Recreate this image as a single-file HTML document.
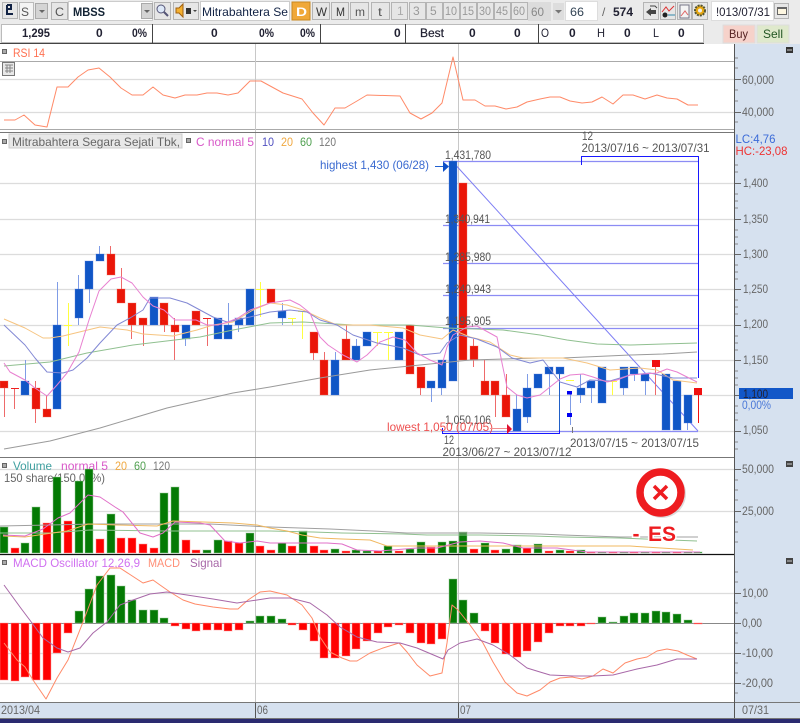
<!DOCTYPE html>
<html><head><meta charset="utf-8"><style>
html,body{margin:0;padding:0;background:#fff;overflow:hidden}
svg{display:block;font-family:"Liberation Sans",sans-serif;font-size:12px}
.b{font-weight:bold;fill:#223}
.l{fill:none;stroke-width:1;stroke-linejoin:round}
.btn{fill:#e6e6e6;stroke:#b4b4b4}
.sq{fill:#aaa;stroke:#666}
</style></head><body>
<svg width="800" height="723" viewBox="0 0 800 723" xmlns="http://www.w3.org/2000/svg">
<rect width="800" height="723" fill="#fff"/>
<!-- toolbar -->
<rect width="800" height="44" fill="#ebebeb"/>
<rect x="2.5" y="2.5" width="15" height="16" class="btn"/>
<path d="M7 5v9h6M7 5h4v4H7" fill="none" stroke="#124" stroke-width="2"/>
<rect x="19.5" y="2.5" width="14" height="17" fill="#f4f4f4" stroke="#bbb"/>
<rect x="35.5" y="3.5" width="12" height="15" fill="#d4d4d4" stroke="#aaa"/>
<path d="M39 10h6l-3 3z" fill="#666"/>
<rect x="51.5" y="2.5" width="16" height="17" class="btn"/>
<rect x="68.5" y="1.5" width="84" height="19" fill="#fff" stroke="#ccc"/>
<rect x="141.5" y="3.5" width="11" height="15" fill="#d4d4d4" stroke="#aaa"/>
<path d="M144 10h6l-3 3z" fill="#666"/>
<rect x="154.5" y="2.5" width="16" height="17" class="btn"/>
<circle cx="161" cy="9" r="4" fill="#dde8f8" stroke="#557"/><path d="M164 12l4 4" stroke="#557" stroke-width="2"/>
<rect x="173.5" y="2.5" width="25" height="17" class="btn"/>
<path d="M176 8h3l4-4v13l-4-4h-3z" fill="#f4b030" stroke="#a06010"/>
<path d="M186 8h5v6h-5z M188 6v2" fill="#333"/><path d="M193 10h4l-2 2z" fill="#444"/>
<rect x="200.5" y="1.5" width="89" height="19" fill="#fff" stroke="#ccc"/>
<rect x="292" y="2" width="18" height="18" fill="#f0a838" stroke="#c88820"/>
<rect x="312.5" y="2.5" width="17" height="17" class="btn"/><rect x="331.5" y="2.5" width="17" height="17" class="btn"/><rect x="350.5" y="2.5" width="18" height="17" class="btn"/><rect x="371.5" y="2.5" width="18" height="17" class="btn"/>
<rect x="391.5" y="2.5" width="16" height="17" class="btn"/><rect x="409.5" y="2.5" width="16" height="17" class="btn"/><rect x="426.5" y="2.5" width="16" height="17" class="btn"/><rect x="443.5" y="2.5" width="16" height="17" class="btn"/><rect x="460.5" y="2.5" width="16" height="17" class="btn"/><rect x="477.5" y="2.5" width="16" height="17" class="btn"/><rect x="494.5" y="2.5" width="16" height="17" class="btn"/><rect x="511.5" y="2.5" width="16" height="17" class="btn"/>
<rect x="528" y="2" width="23" height="19" fill="#dcdcdc"/>
<rect x="553" y="3" width="11" height="17" fill="#ddd"/><path d="M555 10h7l-3.5 3.5z" fill="#777"/>
<rect x="565.5" y="1.5" width="32" height="19" fill="#fff" stroke="#ddd"/>
<rect x="643.5" y="2.5" width="15" height="17" class="btn"/><path d="M646 12l5-4v2h5v4h-5v2z" fill="#444"/><path d="M650 6h5l2 2" stroke="#444" fill="none"/>
<rect x="660.5" y="2.5" width="15" height="17" class="btn"/><path d="M662 12l4-5 3 4 5-5" stroke="#d33" fill="none"/><circle cx="665" cy="15" r="2.5" fill="#222"/><path d="M668 15h7" stroke="#38a" />
<rect x="677.5" y="2.5" width="14" height="17" class="btn"/><path d="M680 5h9v13h-9z" fill="#f4f4f4" stroke="#778"/><path d="M681 16l4-5 3 4" stroke="#d66" fill="none"/>
<rect x="692.5" y="2.5" width="15" height="17" class="btn"/><circle cx="700" cy="10.5" r="5" fill="#e8a810" stroke="#553" stroke-dasharray="2 1" stroke-width="2"/><circle cx="700" cy="10.5" r="2" fill="#eee"/>
<rect x="711.5" y="1.5" width="62" height="19" fill="#fff" stroke="#ddd"/>
<rect x="774.5" y="3.5" width="14" height="15" class="btn"/><rect x="777.5" y="7.5" width="9" height="7" fill="#fdf6e0" stroke="#666"/><path d="M777 7h10v2h-10z" fill="#666"/>
<g fill="#223" font-weight="bold">
<text x="73" y="16" fill="#123" textLength="32" lengthAdjust="spacingAndGlyphs">MBSS</text>
</g>
<g fill="#555">
<text x="21" y="16" textLength="8" lengthAdjust="spacingAndGlyphs">S</text>
<text x="55" y="16" textLength="9" lengthAdjust="spacingAndGlyphs">C</text>
<text x="316" y="16" textLength="11" lengthAdjust="spacingAndGlyphs" fill="#333">W</text>
<text x="336" y="16" textLength="9" lengthAdjust="spacingAndGlyphs" fill="#333">M</text>
<text x="355" y="16" textLength="10" lengthAdjust="spacingAndGlyphs" fill="#555">m</text>
<text x="378" y="16" textLength="4" lengthAdjust="spacingAndGlyphs" fill="#555">t</text>
<text x="397" y="15" fill="#aaa">1</text><text x="413" y="15" fill="#999">3</text><text x="430" y="15" fill="#999">5</text>
<text x="445" y="15" fill="#999" textLength="12" lengthAdjust="spacingAndGlyphs">10</text><text x="462" y="15" fill="#999" textLength="12" lengthAdjust="spacingAndGlyphs">15</text><text x="479" y="15" fill="#999" textLength="12" lengthAdjust="spacingAndGlyphs">30</text><text x="496" y="15" fill="#999" textLength="12" lengthAdjust="spacingAndGlyphs">45</text><text x="513" y="15" fill="#999" textLength="12" lengthAdjust="spacingAndGlyphs">60</text>
<text x="531" y="16" fill="#888" textLength="13" lengthAdjust="spacingAndGlyphs">60</text>
<text x="570" y="16" fill="#345" textLength="14" lengthAdjust="spacingAndGlyphs">66</text>
<text x="602" y="16" fill="#666">/</text>
</g>
<text x="613" y="16" class="b" textLength="20" lengthAdjust="spacingAndGlyphs" fill="#345">574</text>
<text x="202" y="16" fill="#124" textLength="86" lengthAdjust="spacingAndGlyphs">Mitrabahtera Se</text>
<text x="296" y="16" fill="#fff" font-weight="bold" textLength="11" lengthAdjust="spacingAndGlyphs">D</text>
<text x="716" y="16" fill="#223" textLength="54" lengthAdjust="spacingAndGlyphs">!013/07/31</text>
<!-- row 2 -->
<rect x="1.5" y="24.5" width="151" height="18" fill="#fff" stroke="#bbb"/>
<rect x="152.5" y="24.5" width="168" height="18" fill="#fff" stroke="#bbb"/>
<rect x="320.5" y="24.5" width="85" height="18" fill="#fff" stroke="#bbb"/>
<rect x="405.5" y="24.5" width="133" height="18" fill="#fff" stroke="#bbb"/>
<rect x="538.5" y="24.5" width="165" height="18" fill="#fff" stroke="#bbb"/>
<path d="M0 43.5H704M152.5 24V43M320.5 24V43M405.5 24V43M538.5 24V43" stroke="#444"/>
<g class="b" font-weight="bold" fill="#223">
<text x="22" y="37" textLength="28" lengthAdjust="spacingAndGlyphs">1,295</text>
<text x="96" y="37">0</text><text x="132" y="37" textLength="15" lengthAdjust="spacingAndGlyphs">0%</text>
<text x="211" y="37">0</text><text x="259" y="37" textLength="15" lengthAdjust="spacingAndGlyphs">0%</text><text x="300" y="37" textLength="15" lengthAdjust="spacingAndGlyphs">0%</text>
<text x="394" y="37">0</text>
<text x="469" y="37">0</text><text x="514" y="37">0</text>
<text x="569" y="37">0</text><text x="624" y="37">0</text><text x="678" y="37">0</text>
</g>
<g fill="#223" font-size="12">
<text x="420" y="37" textLength="24" lengthAdjust="spacingAndGlyphs" stroke="#223" stroke-width=".2">Best</text>
<text x="541" y="37" textLength="8" lengthAdjust="spacingAndGlyphs">O</text>
<text x="597" y="37" textLength="8" lengthAdjust="spacingAndGlyphs">H</text>
<text x="653" y="37" textLength="6" lengthAdjust="spacingAndGlyphs">L</text>
</g>
<rect x="723" y="25" width="32" height="18" fill="#f6d2ca" stroke="#ddd"/>
<rect x="757" y="25" width="32" height="18" fill="#dfe9cc" stroke="#ddd"/>
<text x="729" y="38" fill="#522" textLength="19" lengthAdjust="spacingAndGlyphs">Buy</text>
<text x="763" y="38" fill="#252" textLength="20" lengthAdjust="spacingAndGlyphs">Sell</text>

<!-- right axis -->
<rect x="735" y="44" width="65" height="674" fill="#d6e1ef"/>
<rect x="0" y="703" width="735" height="15" fill="#d6e1ef"/>
<!-- grids -->
<path d="M0 79.5H734M0 112.5H734M0 183.5H734M0 219.5H734M0 254.5H734M0 289.5H734M0 325.5H734M0 360.5H734M0 395.5H734M0 431.5H734M0 469.5H734M0 511.5H734M0 593.5H734M0 653.5H734M0 683.5H734" stroke="#dcdcdc" stroke-width="1.3"/>
<path d="M0 61.5H734M0 129.5H734" stroke="#aaa"/>
<path d="M255.5 44V703M458.5 44V703" stroke="#c8c8c8"/>
<path d="M0 132.5H735M0 457.5H735M0 702.5H800M0 718.5H800" stroke="#777"/>
<path d="M0 554.5H735" stroke="#111" stroke-width="1.2"/>
<path d="M734.5 44V718M255.5 703V718M458.5 703V718" stroke="#555"/>
<rect y="719" width="800" height="4" fill="#2a2a70"/>

<!-- axis ticks -->
<path d="M735 79.5h6M735 112.5h6M735 183.5h6M735 219.5h6M735 254.5h6M735 289.5h6M735 325.5h6M735 360.5h6M735 395.5h6M735 431.5h6M735 469.5h6M735 511.5h6M735 593.5h6M735 623.5h6M735 653.5h6M735 683.5h6" stroke="#666"/>
<path d="M735 58h3M735 68h3M735 90h3M735 101h3M735 122h3M735 165h3M735 172h3M735 194h3M735 201h3M735 208h3M735 230h3M735 237h3M735 244h3M735 265h3M735 272h3M735 279h3M735 300h3M735 307h3M735 314h3M735 336h3M735 343h3M735 350h3M735 371h3M735 378h3M735 385h3M735 406h3M735 413h3M735 420h3M735 442h3M735 449h3M735 480h3M735 490h3M735 500h3M735 522h3M735 532h3M735 542h3M735 572h3M735 582h3M735 603h3M735 613h3M735 633h3M735 643h3M735 663h3M735 673h3M735 693h3" stroke="#888"/>
<rect x="786" y="47" width="7" height="6" fill="#333"/><rect x="786" y="461" width="7" height="6" fill="#444"/><rect x="786" y="558" width="7" height="6" fill="#444"/>
<path d="M787 50h5M787 464h5M787 561h5" stroke="#ccc"/>
<rect x="739" y="388" width="54" height="11" fill="#1257c8"/>
<g fill="#666">
<text x="742" y="84" textLength="32" lengthAdjust="spacingAndGlyphs">60,000</text>
<text x="742" y="116" textLength="32" lengthAdjust="spacingAndGlyphs">40,000</text>
<text x="743" y="187" textLength="25" lengthAdjust="spacingAndGlyphs">1,400</text>
<text x="743" y="223" textLength="25" lengthAdjust="spacingAndGlyphs">1,350</text>
<text x="743" y="258" textLength="25" lengthAdjust="spacingAndGlyphs">1,300</text>
<text x="743" y="293" textLength="25" lengthAdjust="spacingAndGlyphs">1,250</text>
<text x="743" y="328" textLength="25" lengthAdjust="spacingAndGlyphs">1,200</text>
<text x="743" y="364" textLength="25" lengthAdjust="spacingAndGlyphs">1,150</text>
<text x="743" y="398" textLength="25" lengthAdjust="spacingAndGlyphs" fill="#223">1,100</text>
<text x="743" y="434" textLength="25" lengthAdjust="spacingAndGlyphs">1,050</text>
<text x="742" y="473" textLength="32" lengthAdjust="spacingAndGlyphs">50,000</text>
<text x="742" y="515" textLength="32" lengthAdjust="spacingAndGlyphs">25,000</text>
<text x="742" y="597" textLength="26" lengthAdjust="spacingAndGlyphs">10,00</text>
<text x="742" y="627" textLength="20" lengthAdjust="spacingAndGlyphs">0,00</text>
<text x="742" y="657" textLength="31" lengthAdjust="spacingAndGlyphs">-10,00</text>
<text x="742" y="687" textLength="31" lengthAdjust="spacingAndGlyphs">-20,00</text>
<text x="742" y="714" textLength="27" lengthAdjust="spacingAndGlyphs">07/31</text>
<text x="1" y="714" textLength="39" lengthAdjust="spacingAndGlyphs">2013/04</text>
<text x="257" y="714" textLength="11" lengthAdjust="spacingAndGlyphs">06</text>
<text x="460" y="714" textLength="11" lengthAdjust="spacingAndGlyphs">07</text>
</g>
<text x="742" y="409" fill="#4a78d8" textLength="29" lengthAdjust="spacingAndGlyphs">0,00%</text>
<text x="735.5" y="143" fill="#3a6ad8" textLength="40" lengthAdjust="spacingAndGlyphs">LC:4,76</text>
<text x="735.5" y="155" fill="#ee3333" textLength="52" lengthAdjust="spacingAndGlyphs">HC:-23,08</text>

<!-- headers -->
<rect x="2.5" y="49.5" width="4" height="4" class="sq"/>
<text x="13" y="57" fill="#ff7050" textLength="32" lengthAdjust="spacingAndGlyphs">RSI 14</text>
<rect x="2.5" y="62.5" width="12" height="13" fill="#e8e8e8" stroke="#777"/><path d="M5 65h8M5 68h8M5 71h8M7 65v8M10 65v8" stroke="#888" fill="none"/>
<rect x="2.5" y="139.5" width="4" height="4" class="sq"/>
<rect x="9" y="134" width="173" height="14" fill="#e8e8e8" stroke="#ccc"/>
<text x="12" y="146" fill="#666" textLength="168" lengthAdjust="spacingAndGlyphs">Mitrabahtera Segara Sejati Tbk,</text>
<rect x="186.5" y="138.5" width="4" height="4" class="sq"/>
<text x="196" y="146" fill="#d858c8" textLength="58" lengthAdjust="spacingAndGlyphs">C normal 5</text>
<text x="262" y="146" fill="#5050c0" textLength="12" lengthAdjust="spacingAndGlyphs">10</text>
<text x="281" y="146" fill="#f0a840" textLength="12" lengthAdjust="spacingAndGlyphs">20</text>
<text x="300" y="146" fill="#50a050" textLength="12" lengthAdjust="spacingAndGlyphs">60</text>
<text x="319" y="146" fill="#777" textLength="17" lengthAdjust="spacingAndGlyphs">120</text>
<rect x="2.5" y="463.5" width="4" height="4" class="sq"/>
<text x="13" y="470" fill="#40a0a0" textLength="39" lengthAdjust="spacingAndGlyphs">Volume</text>
<text x="61" y="470" fill="#d858c8" textLength="47" lengthAdjust="spacingAndGlyphs">normal 5</text>
<text x="115" y="470" fill="#f0a840" textLength="12" lengthAdjust="spacingAndGlyphs">20</text>
<text x="134" y="470" fill="#50a050" textLength="12" lengthAdjust="spacingAndGlyphs">60</text>
<text x="153" y="470" fill="#777" textLength="17" lengthAdjust="spacingAndGlyphs">120</text>
<rect x="2.5" y="560.5" width="4" height="4" class="sq"/>
<text x="13" y="567" fill="#d070f0" textLength="127" lengthAdjust="spacingAndGlyphs">MACD Oscillator 12,26,9</text>
<text x="148" y="567" fill="#ff9078" textLength="32" lengthAdjust="spacingAndGlyphs">MACD</text>
<text x="190" y="567" fill="#a868a8" textLength="32" lengthAdjust="spacingAndGlyphs">Signal</text>
<text x="4" y="482" fill="#666" textLength="101" lengthAdjust="spacingAndGlyphs">150 share(150,00%)</text>

<!-- RSI -->
<path class="l" stroke="#ff8a68" d="M4 120L15 120L24 115L35 125L47 127L57 87L68 87L78 77L88 70L99 68L110 77L121 88L132 95L143 95L153 87L163 95L175 98L185 95L197 95L207 93L217 93L228 95L238 93L250 81L261 81L272 87L283 93L302 99L313 113L324 125L335 108L345 108L357 101L367 95L400 96L410 113L421 119L432 113L442 103L453 57L463 100L475 100L485 106L495 106L506 109L517 107L527 102L540 99L550 97L560 97L570 101L582 103L592 102L602 97L613 104L623 95L633 95L645 99L657 95L667 98L677 99L688 105L698 105"/>

<!-- Fibonacci -->
<g fill="none">
<path d="M443 161.5H698M443 225.5H698M443 263.5H698M443 295.5H698M443 328.5H698M443 431.5H698" stroke="#8c8cf4" stroke-width="1.3"/>
<path d="M452 161L698 431" stroke="#7c7cf4"/>
<path d="M698.5 156V378M581.5 165V156.5H698.5M442.5 428V433.5H559.5V373" stroke="#1818ff"/>
</g>

<!-- candle wicks -->
<path fill="none" stroke="#7f9ce6" d="M25.5 360V381M57.5 282V325M78.5 275V325M89.5 289V303M99.5 246V254M185.5 339V346M228.5 303V325M238.5 325V332M282.5 303V325M335.5 352V360M356.5 339V346M431.5 388V402M441.5 388V395M516.5 395V409M527.5 374V423M549.5 374V395M570.5 391V425M580.5 374V403M591.5 388V403M623.5 388V395M634.5 374V381M645.5 381V395M687.5 423V430"/>
<path fill="none" stroke="#2060c8" d="M559.5 374V430"/>
<path fill="none" stroke="#ee6a6a" d="M4.5 388V417M14.5 388V409M35.5 381V423M46.5 395V409M110.5 246V254M121.5 268V289M131.5 325V339M143.5 325V346M164.5 325V332M174.5 318V360M207.5 318V346M313.5 353V360M324.5 352V360M346.5 325V339M420.5 388V395M473.5 339V367M484.5 360V381M495.5 395V417M506.5 374V395M655.5 367V395"/>
<path fill="none" stroke="#f01010" d="M698.5 395V423"/>
<path fill="none" stroke="#ffff40" d="M68.5 303V346M64 325.5H72M260.5 282V317M256 289.5H264M292.5 318V325M288 318.5H296M302.5 311V339M298 311.5H306M377.5 332V346M373 332.5H382M388.5 332V360M384 332.5H393M612.5 381V395M608 381.5H617M566 380.5H574"/>
<!-- candle bodies -->
<g stroke-opacity=".35" stroke-width="1">
<path fill="#1056c6" stroke="#5a7fe0" d="M21 381h8v14h-8zM53 325h8v84h-8zM75 289h8v29h-8zM85 261h8v28h-8zM96 254h8v7h-8zM150 297h8v28h-8zM182 325h8v14h-8zM214 318h8v21h-8zM224 325h8v14h-8zM235 318h8v7h-8zM246 289h8v36h-8zM278 311h8v7h-8zM331 360h8v35h-8zM352 346h8v14h-8zM363 332h8v14h-8zM395 332h8v28h-8zM427 381h8v7h-8zM438 360h8v28h-8zM449 161h8v220h-8zM513 409h8v22h-8zM523 388h8v29h-8zM534 374h8v14h-8zM545 367h8v7h-8zM556 367h8v7h-8zM577 388h8v7h-8zM587 381h8v7h-8zM598 367h8v36h-8zM620 367h8v21h-8zM630 367h8v7h-8zM641 374h8v7h-8zM662 374h8v56h-8zM673 381h8v49h-8zM684 395h8v28h-8z"/>
<path fill="#ea1608" stroke="#f07060" d="M0 381h8v7h-8zM32 388h8v21h-8zM43 409h8v8h-8zM107 254h8v21h-8zM117 289h8v14h-8zM128 303h8v22h-8zM139 318h8v7h-8zM160 303h8v22h-8zM171 325h8v7h-8zM192 311h8v14h-8zM267 289h8v14h-8zM310 332h8v21h-8zM320 360h8v35h-8zM342 339h8v21h-8zM406 325h8v49h-8zM417 367h8v21h-8zM459 183h8v177h-8zM470 346h8v14h-8zM481 381h8v14h-8zM491 381h8v14h-8zM502 395h8v22h-8z"/>
</g>
<path d="M11 388.5h8M203 318.5h8" stroke="#f02020"/>
<rect x="652" y="360" width="8" height="7" fill="#f01010"/><rect x="694" y="388" width="8" height="7" fill="#f01010"/>
<rect x="567" y="391" width="5" height="3.5" fill="#0000f0"/><rect x="567" y="413" width="5" height="4" fill="#0000f0"/>

<!-- MAs -->
<path class="l" stroke="#9a9a9a" d="M4 449L50 441L100 428L167 408L233 393L270 387L320 378L370 370L420 365L470 360L540 358L563 358L630 355L663 354L697 352"/>
<path class="l" stroke="#90c090" d="M4 366L50 362L87 353L133 345L200 337L233 330L270 323L303 322L353 325L410 325L447 328L503 330L540 335L567 340L597 344L630 345L663 344L697 343"/>
<path class="l" stroke="#f6c480" d="M4 319L25 328L43 338L50 338L63 336L100 327L127 330L143 334L173 336L197 330L213 325L233 322L253 310L270 303L287 305L303 310L320 318L337 325L370 325L403 328L420 335L442 339L453 330L470 337L490 342L510 355L523 358L540 358L563 358L587 363L610 370L640 368L657 370L673 380L697 383"/>
<path class="l" stroke="#8288d4" d="M4 325L25 345L35 358L47 372L63 373L73 370L87 358L100 343L117 325L130 318L143 310L150 298L170 298L187 303L213 317L227 322L250 317L270 312L290 310L307 312L320 320L337 325L353 335L377 343L403 348L420 355L440 353L447 343L460 335L477 339L497 347L512 358L530 363L543 360L553 373L560 382L577 387L590 380L610 381L630 375L650 373L673 378L697 378"/>
<path class="l" stroke="#e880d0" d="M4 363L10 372L25 380L35 388L47 396L57 385L67 373L79 352L89 320L99 291L111 279L121 277L132 283L143 297L153 306L164 310L175 320L186 320L196 320L207 325L218 325L228 322L238 318L250 310L270 303L290 300L300 305L310 313L320 337L328 345L343 355L357 362L367 355L380 342L393 337L405 340L417 353L430 360L442 365L447 347L453 335L467 327L477 326L497 337L502 363L507 387L517 395L527 398L540 395L550 387L560 379L570 375L583 374L593 377L607 382L617 380L630 375L643 374L657 373L667 369L677 372L687 377L697 382"/>

<!-- fib labels -->
<g fill="#555">
<text x="445" y="159" textLength="46" lengthAdjust="spacingAndGlyphs">1,431,780</text>
<text x="445" y="223" textLength="45" lengthAdjust="spacingAndGlyphs">1,340,941</text>
<text x="445" y="261" textLength="46" lengthAdjust="spacingAndGlyphs">1,285,980</text>
<text x="445" y="293" textLength="46" lengthAdjust="spacingAndGlyphs">1,240,943</text>
<text x="445" y="325" textLength="46" lengthAdjust="spacingAndGlyphs">1,195,905</text>
<text x="445" y="424" textLength="46" lengthAdjust="spacingAndGlyphs">1,050,106</text>
<text x="444" y="444" textLength="10" lengthAdjust="spacingAndGlyphs">12</text>
<text x="442.5" y="456" textLength="129" lengthAdjust="spacingAndGlyphs">2013/06/27 ~ 2013/07/12</text>
<text x="570" y="447" textLength="129" lengthAdjust="spacingAndGlyphs">2013/07/15 ~ 2013/07/15</text>
<text x="582" y="140" textLength="11" lengthAdjust="spacingAndGlyphs">12</text>
<text x="581.5" y="152" textLength="128" lengthAdjust="spacingAndGlyphs">2013/07/16 ~ 2013/07/31</text>
</g>
<path d="M572.5 427V433" stroke="#777"/>
<text x="320" y="169" fill="#3a6ad0" textLength="109" lengthAdjust="spacingAndGlyphs">highest 1,430 (06/28)</text>
<path d="M435 166.5H444" stroke="#2060d0"/><path d="M443 161.5L449 166.5L443 172z" fill="#1050c8"/>
<text x="387" y="431" fill="#ee5050" textLength="106" lengthAdjust="spacingAndGlyphs">lowest 1,050 (07/05)</text>
<path d="M490 428.5H508" stroke="#f09090"/><path d="M507 424L512 429L507 434z" fill="#e01030"/>

<!-- volume bars -->
<path fill="#047a04" stroke="#9c9" stroke-opacity=".5" d="M0 527h8V553H0zM21 543h8V553h-8zM32 507h8V553h-8zM53 477h8V553h-8zM75 481h8V553h-8zM85 469h8V553h-8zM107 514h8V553h-8zM160 493h8V553h-8zM171 487h8V553h-8zM203 550h8V553h-8zM214 540h8V553h-8zM246 533h8V553h-8zM278 543h8V553h-8zM299 531h8V553h-8zM331 549h8V553h-8zM352 550h8V553h-8zM363 551h8V553h-8zM384 546h8V553h-8zM406 549h8V553h-8zM417 542h8V553h-8zM438 542h8V553h-8zM449 541h8V553h-8zM459 532h8V553h-8zM481 543h8V553h-8zM502 549h8V553h-8zM513 545h8V553h-8zM534 544h8V553h-8zM556 550h8V553h-8zM577 550h8V553h-8zM598 552h8V553h-8zM620 552h8V553h-8zM641 552h8V553h-8zM662 552h8V553h-8zM684 552h8V553h-8zM694 552h8V553h-8z"/>
<path fill="#ff0000" stroke="#f99" stroke-opacity=".5" d="M11 548h8V553h-8zM43 523h8V553h-8zM64 521h8V553h-8zM96 539h8V553h-8zM117 538h8V553h-8zM128 538h8V553h-8zM139 544h8V553h-8zM150 548h8V553h-8zM182 540h8V553h-8zM192 550h8V553h-8zM224 541h8V553h-8zM235 543h8V553h-8zM256 546h8V553h-8zM267 550h8V553h-8zM288 546h8V553h-8zM310 546h8V553h-8zM320 550h8V553h-8zM342 551h8V553h-8zM374 551h8V553h-8zM395 551h8V553h-8zM427 547h8V553h-8zM470 549h8V553h-8zM491 550h8V553h-8zM523 548h8V553h-8zM545 551h8V553h-8zM566 551h8V553h-8zM587 552h8V553h-8zM609 552h8V553h-8zM630 552h8V553h-8zM652 552h8V553h-8zM673 552h8V553h-8z"/>
<!-- volume lines -->
<path class="l" stroke="#a0a0a0" d="M0 526L50 525L93 524L147 524L210 524L270 527L330 529L373 531L407 533L480 533L540 534L563 535L620 537L698 537"/>
<path class="l" stroke="#90c090" d="M0 533L50 533L90 530L167 531L270 531L313 532L342 533L403 534L427 535L480 535L533 536L563 537L620 538L697 541"/>
<path class="l" stroke="#f0b860" d="M3 536L25 537L45 534L67 531L88 524L117 525L157 526L173 521L203 522L233 523L257 525L270 528L287 531L302 535L320 538L342 539L370 540L387 546L540 546L630 546L693 550"/>
<path class="l" stroke="#e070c8" d="M3 535L25 536L43 529L58 518L70 513L88 495L100 497L115 507L123 512L140 533L153 537L163 533L175 522L200 523L210 525L225 541L240 543L257 541L270 543L327 543L342 544L357 550L380 551L417 548L437 548L460 542L480 541L503 543L523 548L540 548L557 548L587 552L700 552"/>

<!-- stamp -->
<circle cx="662" cy="494" r="24" fill="#bbb" opacity=".5"/>
<circle cx="660.5" cy="492.5" r="20.5" fill="#fff" stroke="#ee1c20" stroke-width="7.5"/>
<path d="M654 486L667 499M667 486L654 499" stroke="#ee1c20" stroke-width="3.5"/>
<text x="632.5" y="541" fill="#ee1c20" font-weight="bold" font-size="21" textLength="7" lengthAdjust="spacingAndGlyphs" stroke="#fff" stroke-width="3" paint-order="stroke">-</text>
<text x="648" y="541" fill="#ee1c20" font-weight="bold" font-size="21" textLength="28" lengthAdjust="spacingAndGlyphs" stroke="#fff" stroke-width="3" paint-order="stroke">ES</text>

<!-- MACD -->
<path d="M0 623.5H734" stroke="#888"/>
<path fill="#047a04" stroke="#9c9" stroke-opacity=".5" d="M75 611h8v12h-8zM85 589h8v34h-8zM96 576h8v47h-8zM107 575h8v48h-8zM117 586h8v37h-8zM128 600h8v23h-8zM139 610h8v13h-8zM150 610h8v13h-8zM160 618h8v5h-8zM246 621h8v2h-8zM256 616h8v7h-8zM267 616h8v7h-8zM278 619h8v4h-8zM449 579h8v44h-8zM459 600h8v23h-8zM470 613h8v10h-8zM598 617h8v6h-8zM609 622h8v1h-8zM620 616h8v7h-8zM630 613h8v10h-8zM641 613h8v10h-8zM652 611h8v12h-8zM662 612h8v11h-8zM673 614h8v9h-8zM684 620h8v3h-8z"/>
<path fill="#ff0000" stroke="#f99" stroke-opacity=".5" d="M0 623h8v57H0zM11 623h8v58h-8zM21 623h8v54h-8zM32 623h8v57h-8zM43 623h8v57h-8zM53 623h8v30h-8zM64 623h8v10h-8zM171 623h8v3h-8zM182 623h8v6h-8zM192 623h8v8h-8zM203 623h8v7h-8zM214 623h8v7h-8zM224 623h8v8h-8zM235 623h8v7h-8zM288 623h8v2h-8zM299 623h8v7h-8zM310 623h8v18h-8zM320 623h8v35h-8zM331 623h8v35h-8zM342 623h8v33h-8zM352 623h8v26h-8zM363 623h8v18h-8zM374 623h8v10h-8zM384 623h8v4h-8zM395 623h8v2h-8zM406 623h8v10h-8zM417 623h8v20h-8zM427 623h8v21h-8zM438 623h8v16h-8zM481 623h8v8h-8zM491 623h8v20h-8zM502 623h8v31h-8zM513 623h8v34h-8zM523 623h8v28h-8zM534 623h8v19h-8zM545 623h8v10h-8zM556 623h8v3h-8zM566 623h8v3h-8zM577 623h8v3h-8zM587 623h8v1h-8zM694 623h8v1h-8z"/>
<path class="l" stroke="#ff8a68" d="M4 643L17 660L25 667L33 680L46 699L57 678L68 660L83 622L97 585L110 568L120 568L143 583L153 580L160 585L170 592L183 600L195 604L213 607L230 609L238 609L248 600L260 592L270 591L287 595L302 605L312 618L320 637L330 652L342 658L350 661L357 661L370 653L383 648L399 643L407 652L417 665L430 676L442 673L447 643L452 605L458 610L470 625L483 643L493 662L505 682L517 693L527 696L540 690L550 682L560 678L572 677L582 679L593 676L603 669L613 673L625 663L637 659L647 657L657 651L667 649L678 651L687 655L697 659"/>
<path class="l" stroke="#a868a8" d="M4 585L20 607L32 623L43 638L57 648L68 652L80 648L93 633L107 622L120 605L133 600L150 594L167 592L187 595L213 599L237 603L257 600L270 598L290 598L310 603L327 615L340 627L357 637L377 642L400 643L417 648L443 659L448 650L460 643L477 639L493 645L510 655L527 668L540 672L550 675L573 676L593 676L613 675L637 669L657 665L677 659L697 659"/>
</svg>
</body></html>
